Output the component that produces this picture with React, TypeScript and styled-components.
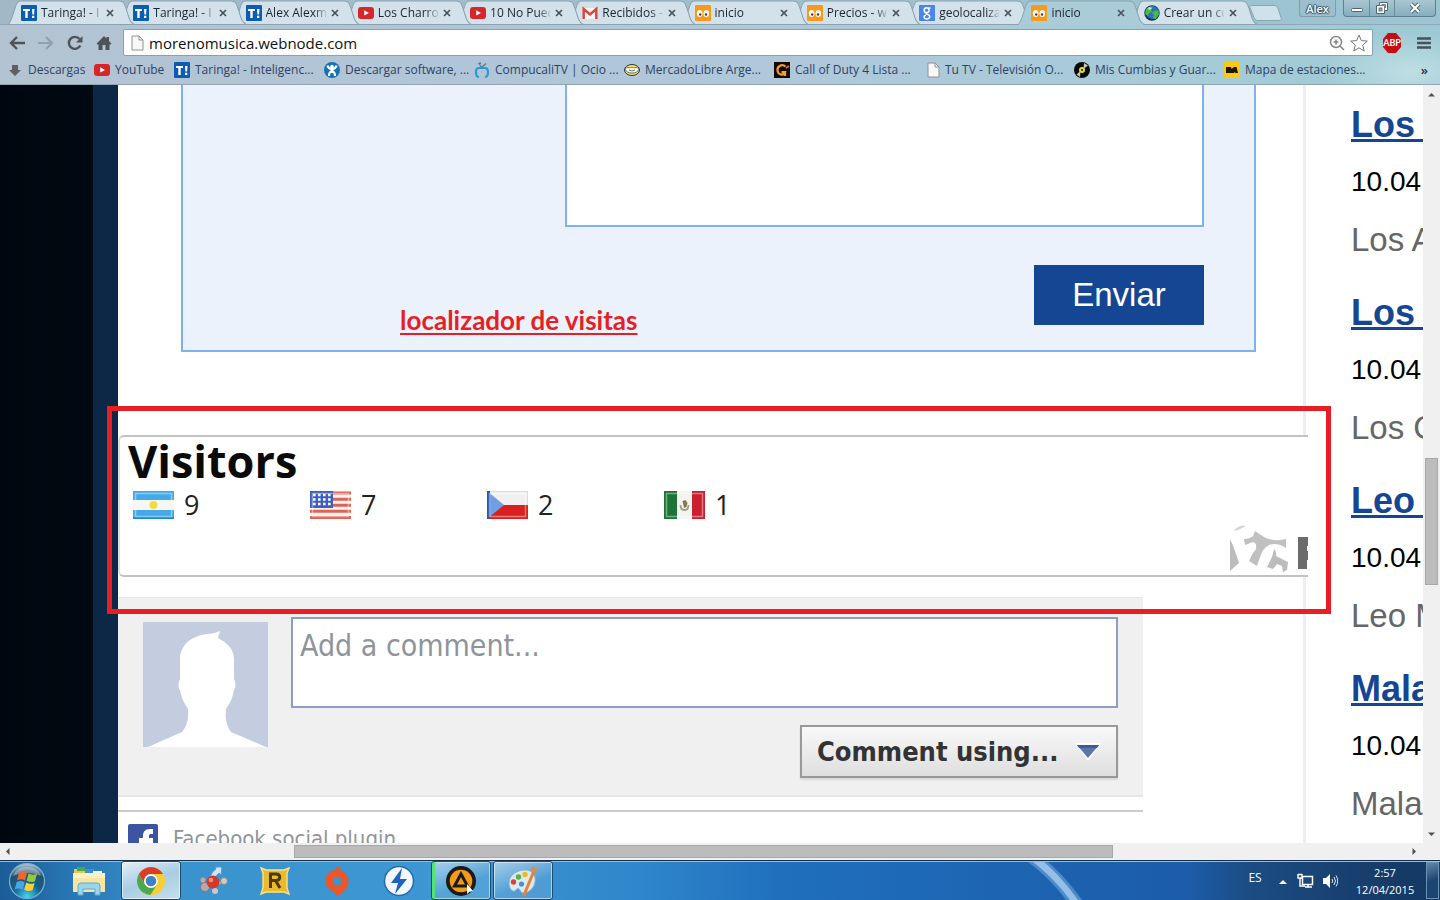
import React from 'react';
import styled, { createGlobalStyle, css } from 'styled-components';

const GlobalStyle = createGlobalStyle`
  * { box-sizing: border-box; }
  body { margin: 0; overflow: hidden; }
  button, textarea, input { font: inherit; margin: 0; border-radius: 0; }
  button { cursor: pointer; padding: 0; border: 0; background: none; }
  svg { display: block; flex: none; }
`;

const ui = `'Open Sans', 'Noto Sans', sans-serif`;
const arial = `'Liberation Sans', Arial, sans-serif`;
const tahoma = `'DejaVu Sans Condensed', 'DejaVu Sans', sans-serif`;

const Desktop = styled.div`
  display: flex;
  flex-direction: column;
  height: 100vh;
  background: #fff;
  font-family: ${ui};
`;

/* ---------- Browser chrome ---------- */

const Chrome = styled.header`
  flex: none;
  color: #222;
  background:
    radial-gradient(ellipse 90px 40px at 98% 85%, rgba(214, 236, 238, 0.6), transparent),
    linear-gradient(90deg, #b3c3d2 0, #b0c6d8 35%, #aec9da 60%, #a4ccd7 85%, #9cc9d3 100%);
  border-bottom: 1px solid #8fa5b1;
`;

const TabStrip = styled.div`
  display: flex;
  align-items: stretch;
  justify-content: space-between;
  height: 25px;
  padding-left: 8px;
  background: linear-gradient(90deg, #a3b8c6, #9fbfcd 50%, #9cc5d1);
  border-bottom: 1px solid #8fa8b6;
`;

const Tabs = styled.nav`
  display: flex;
  flex: 0 1 1235px;
  min-width: 0;
`;

const Tab = styled.div<{ $order: number }>`
  position: relative;
  display: flex;
  align-items: center;
  flex: 1 1 0;
  min-width: 0;
  height: 25px;
  padding: 1px 5px 0 13px;
  z-index: ${(p) => p.$order};
`;

const TabShape = styled.svg`
  position: absolute;
  left: 0;
  top: 0;
  width: calc(100% + 14px);
  height: 25px;
`;

const TabLink = styled.a`
  position: relative;
  display: flex;
  align-items: center;
  gap: 4px;
  flex: 1;
  min-width: 0;
  color: #1c2430;
  text-decoration: none;
  font-size: 12px;
  line-height: 16px;
`;

const TabTitle = styled.span`
  flex: 1;
  overflow: hidden;
  white-space: nowrap;
  margin-right: 4px;
  mask-image: linear-gradient(90deg, #000 80%, rgba(0, 0, 0, 0.15) 100%);
`;

const TabClose = styled.button`
  position: relative;
  width: 10px;
  height: 16px;
  display: grid;
  place-items: center;
`;

const NewTab = styled.button`
  width: 34px;
  height: 16px;
  margin: 5px auto 0 6px;
`;

const WindowControls = styled.div`
  display: flex;
  align-items: flex-start;
  height: 17px;
  padding-right: 4px;
`;

const UserButton = styled.button`
  width: 37px;
  height: 17px;
  margin-right: 7px;
  border: 1px solid #7f9dab;
  border-top: 0;
  border-radius: 0 0 3px 3px;
  background: #9dbfcd;
  color: #fff;
  font-size: 11px;
  line-height: 17px;
  font-weight: 600;
  text-shadow: 1px 0 1px #35505e, -1px 0 1px #35505e, 0 1px 1px #35505e, 0 -1px 1px #35505e;
`;

const WindowGroup = styled.div`
  display: flex;
  height: 17px;
  border: 1px solid #5f7f90;
  border-top: 0;
  border-radius: 0 0 4px 4px;
  background: linear-gradient(180deg, #a9c6d2, #86aebe);
`;

const WindowButton = styled.button<{ $w: number }>`
  display: grid;
  place-items: center;
  width: ${(p) => p.$w}px;
  height: 16px;
  & + & { border-left: 1px solid #6c8b9b; }
`;

const Toolbar = styled.div`
  display: flex;
  align-items: center;
  height: 32px;
  padding: 3px 9px 0 9px;
`;

const NavButtons = styled.div`
  display: flex;
  gap: 13px;
  width: 114px;
`;

const IconButton = styled.button`
  display: grid;
  place-items: center;
  width: 16px;
  height: 20px;
`;

const AddressBar = styled.form`
  display: flex;
  align-items: center;
  flex: 1;
  gap: 5px;
  height: 27px;
  padding: 0 4px 0 7px;
  border: 1px solid #8b9fae;
  border-radius: 2px;
  background: #fff;
`;

const AddressInput = styled.input`
  flex: 1;
  min-width: 0;
  border: 0;
  outline: 0;
  padding: 0;
  color: #111;
  background: none;
  font-size: 15px;
  line-height: 20px;
`;

const ToolbarEnd = styled.div`
  display: flex;
  align-items: center;
  gap: 14px;
  padding-left: 8px;
`;

const Bookmarks = styled.nav`
  display: flex;
  align-items: center;
  height: 27px;
  padding: 0 12px 2px 7px;
`;

const Bookmark = styled.a<{ $w: number }>`
  display: flex;
  align-items: center;
  gap: 5px;
  width: ${(p) => p.$w}px;
  white-space: nowrap;
  color: #2f4264;
  text-decoration: none;
  font-size: 12px;
  line-height: 16px;
`;

const More = styled.button`
  margin-left: auto;
  color: #26333f;
  font-size: 13px;
  line-height: 16px;
  font-weight: 600;
`;

/* ---------- Page ---------- */

const Viewport = styled.div`
  display: flex;
  flex: 1;
  min-height: 0;
`;

const Page = styled.div`
  display: flex;
  flex: 1;
  min-width: 0;
  overflow: hidden;
  background: linear-gradient(90deg, #00060f 0, #000a12 93px, #0d2746 93px, #0d2746 118px, #fff 118px);
  padding-left: 118px;
`;

const Article = styled.main`
  flex: 1;
  min-width: 0;
  border-right: 3px solid #ebeefa;
`;

const ContactForm = styled.form`
  position: relative;
  display: flex;
  flex-direction: column;
  align-items: flex-end;
  gap: 38px;
  margin: 0 47px 0 63px;
  padding: 0 50px 25px 382px;
  border: 2px solid #7fb1ee;
  border-top: 0;
  background: #ebf2fc;
`;

const MessageBox = styled.textarea`
  display: block;
  width: 100%;
  height: 142px;
  resize: none;
  outline: 0;
  border: 2px solid #7fb1ee;
  border-top: 0;
  background: #fff;
`;

const SendButton = styled.button`
  width: 170px;
  height: 60px;
  background: #144693;
  color: #fff;
  font-family: ${arial};
  font-size: 33px;
  line-height: 60px;
`;

const Note = styled.span`
  position: absolute;
  left: 217px;
  bottom: 14px;
  color: #e81e25;
  font-family: Lato, sans-serif;
  font-weight: 700;
  font-size: 26px;
  line-height: 32px;
  text-decoration: underline;
  text-decoration-thickness: 2px;
  text-underline-offset: 3px;
`;

const VisitorsArea = styled.section`
  position: relative;
  margin: 83px -5px 0 0;
`;

const VisitorsCard = styled.div`
  height: 142px;
  padding: 0 0 0 8px;
  border: 2px solid #c2c2c2;
  border-left-color: #dedede;
  border-right: 0;
  border-radius: 6px 0 0 6px;
  background: #fff;
`;

const VisitorsTitle = styled.h2`
  margin: 0;
  color: #0a0a0a;
  font-size: 45px;
  line-height: 48px;
  font-weight: 700;
`;

const FlagList = styled.ul`
  display: flex;
  margin: 4px 0 0;
  padding: 0 0 0 5px;
  list-style: none;
`;

const FlagItem = styled.li`
  display: flex;
  align-items: center;
  gap: 10px;
  width: 177px;
  color: #222;
  font-size: 27px;
  line-height: 32px;
`;

const CounterLogo = styled.svg`
  position: absolute;
  right: 0;
  bottom: 4px;
`;

const Highlight = styled.div`
  position: absolute;
  inset: -29px -23px -37px -11px;
  border: 5px solid #e81e25;
  pointer-events: none;
`;

const Comments = styled.section`
  width: calc(100% - 160px);
  margin-top: 20px;
  font-family: ${tahoma};
`;

const CommentBox = styled.form`
  display: flex;
  align-items: flex-start;
  gap: 23px;
  height: 200px;
  padding: 19px 25px 0 25px;
  border: solid #e7e7e7;
  border-width: 1px 0 2px;
  background: #f0f0f0;
`;

const Avatar = styled.svg`
  margin-top: 5px;
`;

const CommentFields = styled.div`
  display: flex;
  flex-direction: column;
  align-items: flex-end;
  flex: 1;
  gap: 17px;
`;

const CommentInput = styled.textarea`
  display: block;
  width: 100%;
  height: 91px;
  padding: 9px 7px 7px;
  resize: none;
  outline: 0;
  border: 2px solid #8c9fc3;
  background: #fff;
  font-size: 30px;
  line-height: 36px;
  &::placeholder { color: #8f949c; opacity: 1; }
`;

const CommentUsing = styled.button`
  display: flex;
  align-items: center;
  justify-content: space-between;
  width: 318px;
  height: 53px;
  padding: 0 15px;
  border: 2px solid #999;
  background: linear-gradient(180deg, #f8f8f8, #dfdfdf);
  box-shadow: 0 2px 2px rgba(0, 0, 0, 0.1);
  color: #333;
  font-size: 27px;
  line-height: 36px;
  font-weight: 700;
`;

const PluginFooter = styled.a`
  display: flex;
  align-items: flex-start;
  gap: 15px;
  margin-top: 13px;
  padding: 12px 10px;
  border-top: 2px solid #ccc;
  color: #8f949c;
  font-size: 22px;
  line-height: 30px;
  text-decoration: none;
`;

const Sidebar = styled.aside`
  flex: none;
  width: 117px;
  padding: 18px 0 0 45px;
  overflow: hidden;
  white-space: nowrap;
  font-family: ${arial};
`;

const News = styled.article`
  height: 188px;
`;

const NewsLink = styled.a`
  display: block;
  color: #144693;
  font-size: 36px;
  line-height: 44px;
  font-weight: 700;
  text-decoration: underline;
  text-decoration-thickness: 3px;
  text-underline-offset: 2px;
`;

const NewsDate = styled.time`
  display: block;
  margin-top: 17px;
  color: #000;
  font-size: 28px;
  line-height: 36px;
`;

const NewsText = styled.p`
  margin: 18px 0 0;
  color: #666;
  font-size: 33px;
  line-height: 44px;
`;

/* ---------- Scroll bars ---------- */

const VScroll = styled.div`
  display: flex;
  flex-direction: column;
  align-items: center;
  flex: none;
  width: 17px;
  padding: 7px 0 6px;
  background: #f0f0f0;
`;

const HScroll = styled.div`
  display: flex;
  align-items: center;
  flex: none;
  height: 17px;
  padding: 0 23px 0 5px;
  background: #f0f0f0;
`;

const Track = styled.div<{ $before: number; $after: number; $vertical?: boolean }>`
  display: grid;
  flex: 1;
  ${(p) => p.$vertical
    ? css`grid-template-rows: ${p.$before}fr 127px ${p.$after}fr; justify-items: center;`
    : css`grid-template-columns: ${p.$before}fr 819px ${p.$after}fr; align-items: center;`}
`;

const Thumb = styled.div<{ $vertical?: boolean }>`
  border: 1px solid #a8a8a8;
  background: #bcbcbc;
  ${(p) => p.$vertical ? css`grid-row: 2; width: 13px;` : css`grid-column: 2; height: 13px;`}
`;

/* ---------- Taskbar ---------- */

const Taskbar = styled.footer`
  position: relative;
  display: flex;
  align-items: stretch;
  flex: none;
  height: 40px;
  border-top: 1px solid #12304e;
  box-shadow: inset 0 1px 0 #8fc0e2;
  background: linear-gradient(90deg, #1a5c96 0, #2a7ab8 80px, #3a93cc 180px, #3d97d3 450px, #2f86ca 640px, #1f6fbd 780px, #1d65b3 1000px, #1c5ca8 1190px, #1b4c82 1250px, #163a66 1400px);
  color: #fff;
`;

const Streak = styled.svg`
  position: absolute;
  left: 71%;
  top: 1px;
`;

const StartButton = styled.button`
  display: flex;
  align-items: center;
  width: 59px;
  padding-left: 8px;
`;

const TaskList = styled.div`
  display: flex;
  gap: 2px;
`;

const Task = styled.button<{ $state?: 'active' | 'open' | 'busy' }>`
  display: grid;
  place-items: center;
  width: 60px;
  height: 39px;
  border-radius: 3px;
  ${(p) => p.$state && css`
    border: 1px solid #1d4a70;
    box-shadow: inset 0 0 0 1px rgba(255, 255, 255, 0.55);
    background: linear-gradient(160deg, rgba(255, 255, 255, 0.55), rgba(255, 255, 255, 0.12) 60%);
  `}
  ${(p) => p.$state === 'active' && css`
    background: linear-gradient(160deg, #e4eff7, #a8cde4 50%, #c4dfee);
  `}
  ${(p) => p.$state === 'busy' && css`
    box-shadow: inset 3px 0 1px #4ee86c, inset 0 0 0 1px rgba(255, 255, 255, 0.55);
  `}
`;

const Tray = styled.div`
  display: flex;
  align-items: center;
  margin-left: auto;
  font-size: 11px;
  line-height: 17px;
`;

const Language = styled.button`
  width: 30px;
  height: 24px;
  margin-bottom: 6px;
  color: #fff;
  font-size: 12px;
`;

const TrayIcons = styled.div`
  display: flex;
  align-items: center;
  gap: 7px;
  margin-left: 6px;
`;

const Clock = styled.button`
  width: 76px;
  margin-left: 9px;
  color: #fff;
  font-size: 11px;
  line-height: 17px;
  text-align: center;
`;

const ShowDesktop = styled.button`
  align-self: stretch;
  width: 13px;
  margin: 1px 1px 1px 3px;
  border: 1px solid #6d92b5;
  background: linear-gradient(160deg, #6488ab, #1d4574 50%);
`;

/* ---------- Icons ---------- */

const Taringa = () => (
  <svg width="16" height="16" viewBox="0 0 16 16">
    <rect width="16" height="16" rx="1" fill="#0b5cb5" />
    <path d="M2 4h7v2H6.700v7H4.300V6H2zM11 4h2.500l-.4 5.500h-1.700zM11 10.700h2.300V13H11z" fill="#fff" />
  </svg>
);

const YouTube = () => (
  <svg width="16" height="16" viewBox="0 0 16 16">
    <rect y="2" width="16" height="12" rx="3" fill="#d8252a" />
    <path d="M6.200 5.200v5.400L11 8z" fill="#fff" />
  </svg>
);

const Gmail = () => (
  <svg width="16" height="16" viewBox="0 0 16 16">
    <path d="M1 3h14v11H1z" fill="#f4f4f4" />
    <path d="M1.700 14V4L8 9.500 14.300 4v10" fill="none" stroke="#d9453d" strokeWidth="2.400" />
  </svg>
);

const Webnode = () => (
  <svg width="16" height="16" viewBox="0 0 16 16">
    <rect width="16" height="16" rx="1" fill="#f79a1c" />
    <ellipse cx="4.700" cy="8.500" rx="2.800" ry="3.500" fill="#fff" />
    <ellipse cx="11.300" cy="8.500" rx="2.800" ry="3.500" fill="#fff" />
    <circle cx="5.200" cy="9.500" r="1.200" fill="#5d3a10" />
    <circle cx="11" cy="9.500" r="1.200" fill="#5d3a10" />
  </svg>
);

const Google = () => (
  <svg width="16" height="16" viewBox="0 0 16 16">
    <rect width="16" height="16" rx="1" fill="#4a85ee" />
    <circle cx="7.600" cy="5.200" r="2.400" fill="none" stroke="#fff" strokeWidth="1.600" />
    <path d="M9.500 3h2M8 7.600c-2 1 0 1.600 1.500 2.200 2.500 1.200 1 4.200-1.900 4.200s-3.800-2.900-.6-3.700" fill="none" stroke="#fff" strokeWidth="1.400" />
  </svg>
);

const Globe = () => (
  <svg width="16" height="16" viewBox="0 0 16 16">
    <circle cx="8" cy="8" r="7.700" fill="#14344f" />
    <circle cx="8.500" cy="7.500" r="6.500" fill="#2b73b8" />
    <path d="M2 4c2-2 5-3 7-2L7 5l1 2-3 1-1 3-3-2zM10 6l4-1 1 4-3 5-3-1 1-3-2-2z" fill="#4db848" />
    <path d="M5 2l3 1-2 2-2-1z" fill="#c8e9c0" />
  </svg>
);

const Doc = () => (
  <svg width="13" height="16" viewBox="0 0 13 16">
    <path d="M1 1h7l4 4v10H1z" fill="#f8f8f8" stroke="#909090" />
    <path d="M8 1v4h4" fill="none" stroke="#909090" />
  </svg>
);

const DownArrow = () => (
  <svg width="16" height="16" viewBox="0 0 16 16">
    <path d="M5 3h6v5h3l-6 6-6-6h3z" fill="#5d5f64" />
  </svg>
);

const Softonic = () => (
  <svg width="16" height="16" viewBox="0 0 16 16">
    <circle cx="8" cy="8" r="8" fill="#1573b5" />
    <path d="M3.500 3.500c1 4.500 8 4.500 9 0M5 14c0-6 6-6 6 0" fill="none" stroke="#fff" strokeWidth="2.200" />
    <circle cx="8" cy="4.500" r="1.800" fill="#fff" />
    <path d="M6.500 7h3v4h-3z" fill="#fff" />
  </svg>
);

const TvIcon = () => (
  <svg width="16" height="16" viewBox="0 0 16 16">
    <path d="M5 6c-3 0-3 2-3 4s0 5 3 5M8 6h3c3 0 3 2 3 4s0 5-3 5" fill="none" stroke="#2a9ad0" strokeWidth="2.200" />
    <path d="M8 6L5 1.500 7 1M8 5l4-3.500" fill="none" stroke="#4b7f9c" strokeWidth="1.300" />
    <path d="M4 6h7" stroke="#2a9ad0" strokeWidth="2" />
  </svg>
);

const Mercado = () => (
  <svg width="16" height="16" viewBox="0 0 16 16">
    <ellipse cx="8" cy="8" rx="7.500" ry="5.500" fill="#f5e53d" stroke="#2b3457" />
    <path d="M1 7c3-3 5 0 7-2 2 2 4-1 7 2-1 3-4 4-7 4S2 10 1 7z" fill="#fff" stroke="#444c66" strokeWidth=".8" />
    <path d="M5 8l3 1 3-1" fill="none" stroke="#444c66" strokeWidth=".8" />
  </svg>
);

const GIcon = () => (
  <svg width="16" height="16" viewBox="0 0 16 16">
    <rect width="16" height="16" fill="#140904" />
    <path d="M11.500 4.500C8 1.500 3 4 3.500 8.500c.5 4.500 6 5.500 7.500 1.500H7.500M11 9v5" fill="none" stroke="#f1a22c" strokeWidth="2.200" />
    <path d="M12 6l3-2" stroke="#d97316" strokeWidth="2" />
  </svg>
);

const Vinyl = () => (
  <svg width="16" height="16" viewBox="0 0 16 16">
    <circle cx="8" cy="8" r="8" fill="#0a0a0a" />
    <path d="M10 1l4 2.500L9.500 7zM2.500 12.500L6.500 9 6 15z" fill="#c5c5c5" />
    <circle cx="8" cy="8" r="3" fill="#e8df28" />
    <circle cx="8" cy="8" r="1" fill="#111" />
  </svg>
);

const MapIcon = () => (
  <svg width="16" height="16" viewBox="0 0 16 16">
    <rect width="16" height="16" rx="1" fill="#fcc911" />
    <path d="M2 5h5l.5 2L10 5h2.500L14 11h-2.500L11 10l-1 1H2z" fill="#1b1608" />
  </svg>
);

const Flag = ({ children }: { children: React.ReactNode }) => (
  <svg width="41" height="28" viewBox="0 0 41 28">
    {children}
    <rect x="2.500" y="2.500" width="36" height="23" fill="none" stroke="#fff" strokeOpacity=".4" strokeWidth="1.500" />
  </svg>
);

const Argentina = () => (
  <Flag>
    <rect width="41" height="28" fill="#44a9e6" />
    <rect y="9" width="41" height="10" fill="#f6f6f3" />
    <path d="M0 27h41" stroke="#1c8bd3" strokeWidth="2" />
    <circle cx="20.500" cy="14" r="4" fill="#f4da3d" />
  </Flag>
);

const Usa = () => (
  <Flag>
    <rect width="41" height="28" fill="#fbf3f2" />
    <path d="M0 2h41M0 8.200h41M0 14.200h41M0 20.200h41M0 26.400h41" stroke="#dd6455" strokeWidth="3" />
    <rect width="23" height="17" fill="#3d5fc0" />
    <path d="M3 4h18M3 8.500h18M3 13h18" stroke="#fff" strokeWidth="2.400" strokeDasharray="2.600 2.400" />
  </Flag>
);

const Czech = () => (
  <Flag>
    <rect width="41" height="14" fill="#f0f0f0" />
    <path d="M0 .5h41M40.500 0v14" stroke="#dadada" />
    <rect y="14" width="41" height="14" fill="#d9201f" />
    <path d="M0 0l17 14L0 28z" fill="#6f9fe0" />
    <path d="M1.500 0v28" stroke="#2258b8" strokeWidth="3" />
  </Flag>
);

const Mexico = () => (
  <Flag>
    <rect width="41" height="28" fill="#f3f3f0" />
    <rect width="13" height="28" fill="#1c7537" />
    <rect x="28" width="13" height="28" fill="#cb2030" />
    <path d="M16.500 14q0 5 4 5t4-5" fill="none" stroke="#9aa287" strokeWidth="1.800" />
    <path d="M18.500 10l3-1 2 3-1 4-2.500 1z" fill="#8a7650" />
  </Flag>
);

const Orb = () => (
  <svg width="38" height="38" viewBox="0 0 38 38">
    <defs>
      <radialGradient id="orb" cx=".5" cy=".95" r=".9">
        <stop offset="0" stopColor="#3fd6f5" />
        <stop offset=".45" stopColor="#14608f" />
        <stop offset=".8" stopColor="#24506f" />
        <stop offset="1" stopColor="#9db9c9" />
      </radialGradient>
    </defs>
    <circle cx="19" cy="19" r="17.500" fill="url(#orb)" stroke="#7fb0cf" strokeWidth="1.200" />
    <path d="M5 14c4-12 24-12 28 0-9-4-19-4-28 0z" fill="#fff" fillOpacity=".35" />
    <path d="M11 11c3-2 5-1.500 8 0l-2 7.500c-3-1.700-5-1.700-8-.2z" fill="#f0652a" />
    <path d="M20.500 11.500c3 1.500 5.500 1.500 8.500.2l-2 7.500c-3 1.300-5.500 1-8.400-.4z" fill="#93c83e" />
    <path d="M8.700 20c3-1.500 5-1.300 7.900.2l-2 7.500c-3-1.600-5.200-1.500-8-.1z" fill="#48a6e6" />
    <path d="M18.200 20.500c3 1.500 5.500 1.700 8.400.4l-2 7.400c-3 1.200-5.600 1-8.400-.5z" fill="#fdce3a" />
  </svg>
);

const Explorer = () => (
  <svg width="34" height="32" viewBox="0 0 34 32">
    <path d="M2 4h10l2 3h16v20H2z" fill="#e6c75e" />
    <path d="M5 2h8v4H5z" fill="#45a94c" />
    <path d="M13 4h9v4h-9z" fill="#3a8fd0" />
    <path d="M21 6h9v4h-9z" fill="#f6f3e4" />
    <path d="M1 8h32v19H1z" fill="#f7e6a0" />
    <path d="M1 8h32v5H1z" fill="#fbf1c4" />
    <path d="M6 30v-9q0-3 3-3h16q3 0 3 3v9h-5v-6H11v6z" fill="#9bd4ef" stroke="#5fa9cf" />
  </svg>
);

const ChromeLogo = () => (
  <svg width="30" height="30" viewBox="0 0 30 30">
    <circle cx="15" cy="15" r="14" fill="#f7cf35" />
    <path d="M2.880 8A14 14 0 0 1 27.100 8H15a7 7 0 0 0-6.100 10.500z" fill="#da3a2f" />
    <path d="M2.880 8a14 14 0 0 0 11.400 21l6.800-10.500a7 7 0 0 1-12.200 0z" fill="#4aa84e" />
    <circle cx="15" cy="15" r="6.800" fill="#fff" />
    <circle cx="15" cy="15" r="5.300" fill="#3f80cf" />
  </svg>
);

const Molecule = () => (
  <svg width="32" height="30" viewBox="0 0 32 30">
    <path d="M8 20L26 16M16 16l2 10" stroke="#aab4be" strokeWidth="3" />
    <path d="M13 11q2-6 6-8l-1-2 7 0-1 8-2-2q-3 2-4 6z" fill="#cfe4f4" stroke="#5e94c0" />
    <circle cx="8" cy="21" r="4.500" fill="#b9a7aa" stroke="#7d7c85" />
    <circle cx="27" cy="15" r="3.500" fill="#ccc9cd" stroke="#85868f" />
    <circle cx="18" cy="25" r="3" fill="#d0c5c8" />
    <circle cx="6" cy="14" r="2.500" fill="#d8a295" />
    <circle cx="16" cy="16" r="6.500" fill="#cf3a2b" />
    <circle cx="14" cy="14" r="2.300" fill="#f08f7c" />
  </svg>
);

const Rockstar = () => (
  <svg width="32" height="30" viewBox="0 0 32 30">
    <path d="M2 2l5 2h18l5-2-2 5v15l2 6-5-2H7l-5 2 2-6V7z" fill="#ebb92a" stroke="#f8e38b" strokeWidth="1.400" />
    <path d="M11.500 22V8h5.500c5 0 5 6.500 0 6.500h-5M16.500 14.500l4.500 7.500" fill="none" stroke="#4a3a16" strokeWidth="3" />
  </svg>
);

const Origin = () => (
  <svg width="26" height="32" viewBox="0 0 26 32">
    <path d="M15 1c-2 1-3 2.500-2.800 4C6 5 1.500 9.500 1.500 15.500S5 25 11 27.500c1 1 1.300 2 0 4 7-2 13.500-8 13.500-15.500 0-5-2.500-8-6.500-10-2.500-1.200-3.500-2.500-3-5z" fill="#e9572b" />
    <circle cx="13" cy="16" r="4.300" fill="#3f94cb" />
  </svg>
);

const Daemon = () => (
  <svg width="32" height="32" viewBox="0 0 32 32">
    <circle cx="16" cy="16" r="14.500" fill="#f2f7fc" stroke="#2768b5" strokeWidth="1.500" />
    <path d="M19 3L8 18h7l-3 11 12-15h-7z" fill="#1e63c0" />
  </svg>
);

const Aimp = () => (
  <svg width="32" height="32" viewBox="0 0 32 32">
    <circle cx="16" cy="16" r="15" fill="#1c1a17" />
    <circle cx="16" cy="16" r="11.300" fill="#f49c1a" />
    <path d="M16 9l6.500 12h-13z" fill="none" stroke="#1c1a17" strokeWidth="3" />
    <path d="M22 19v10l2.500-2.300L28 26z" fill="#fff" />
  </svg>
);

const Paint = () => (
  <svg width="32" height="32" viewBox="0 0 32 32">
    <path d="M2 18C2 10 10 5 18 5s11 6 10 12-6 11-12 11c-3 0-2-4-5-4.500-2-.3-2 3.500-5 2.500S2 21 2 18z" fill="#dbe9f2" stroke="#8fb1c6" />
    <circle cx="6.500" cy="17" r="2.700" fill="#d8423c" />
    <circle cx="11.500" cy="12" r="2.700" fill="#58b14c" />
    <circle cx="18" cy="9.500" r="2.700" fill="#f0b92d" />
    <circle cx="14.500" cy="19" r="2.600" fill="#4c8fc8" />
    <path d="M27 6L17 30" stroke="#e68433" strokeWidth="3" strokeLinecap="round" />
    <path d="M25 1l7 3-4 4-4-2z" fill="#c59261" />
  </svg>
);

/* ---------- Data ---------- */

const tabs = [
  { title: 'Taringa! - I', icon: <Taringa /> },
  { title: 'Taringa! - I', icon: <Taringa /> },
  { title: 'Alex Alexm', icon: <Taringa /> },
  { title: 'Los Charro', icon: <YouTube /> },
  { title: '10 No Pued', icon: <YouTube /> },
  { title: 'Recibidos -', icon: <Gmail /> },
  { title: 'inicio', icon: <Webnode /> },
  { title: 'Precios - w', icon: <Webnode /> },
  { title: 'geolocaliza', icon: <Google /> },
  { title: 'inicio', icon: <Webnode />, active: true },
  { title: 'Crear un co', icon: <Globe /> },
];

const bookmarks = [
  { label: 'Descargas', icon: <DownArrow />, w: 87 },
  { label: 'YouTube', icon: <YouTube />, w: 80 },
  { label: 'Taringa! - Inteligenc...', icon: <Taringa />, w: 150 },
  { label: 'Descargar software, ...', icon: <Softonic />, w: 150 },
  { label: 'CompucaliTV | Ocio ...', icon: <TvIcon />, w: 150 },
  { label: 'MercadoLibre Arge...', icon: <Mercado />, w: 150 },
  { label: 'Call of Duty 4 Lista ...', icon: <GIcon />, w: 153 },
  { label: 'Tu TV - Televisión O...', icon: <Doc />, w: 147 },
  { label: 'Mis Cumbias y Guar...', icon: <Vinyl />, w: 150 },
  { label: 'Mapa de estaciones...', icon: <MapIcon />, w: 150 },
];

const visitors = [
  { country: 'Argentina', flag: <Argentina />, count: 9 },
  { country: 'USA', flag: <Usa />, count: 7 },
  { country: 'Czech Republic', flag: <Czech />, count: 2 },
  { country: 'Mexico', flag: <Mexico />, count: 1 },
];

const news = [
  { title: 'Los A', date: '10.04', text: 'Los A' },
  { title: 'Los C', date: '10.04', text: 'Los C' },
  { title: 'Leo M', date: '10.04', text: 'Leo M' },
  { title: 'Mala', date: '10.04', text: 'Mala' },
];

const tasks: { name: string; icon: React.ReactNode; state?: 'active' | 'open' | 'busy' }[] = [
  { name: 'Explorador', icon: <Explorer /> },
  { name: 'Chrome', icon: <ChromeLogo />, state: 'active' },
  { name: 'Ares', icon: <Molecule /> },
  { name: 'Rockstar', icon: <Rockstar /> },
  { name: 'Origin', icon: <Origin /> },
  { name: 'Daemon', icon: <Daemon /> },
  { name: 'AIMP', icon: <Aimp />, state: 'busy' },
  { name: 'Paint', icon: <Paint />, state: 'open' },
];

/* ---------- Sections ---------- */

const BrowserChrome = () => (
  <Chrome>
    <TabStrip>
      <Tabs aria-label="Pestañas">
        {tabs.map((t, i) => (
          <Tab key={i} $order={t.active ? 20 : 12 - i}>
            <TabShape viewBox="0 0 126 25" preserveAspectRatio="none">
              <path
                d="M0 24.500C3 23 4 18 7 8c2-6 3-7 6-7h98c4 0 5 2 7 8 3 10 4 14 8 15.500z"
                fill={t.active ? '#a9ccd8' : '#d3e2ea'}
                stroke="#8ba3b0"
              />
              {t.active && <path d="M1 24.500h124" stroke="#a9ccd8" strokeWidth="2" />}
            </TabShape>
            <TabLink href="#">
              {t.icon}
              <TabTitle>{t.title}</TabTitle>
            </TabLink>
            <TabClose aria-label="Cerrar">
              <svg width="8" height="8" viewBox="0 0 8 8">
                <path d="M1 1l6 6M7 1L1 7" stroke="#47525b" strokeWidth="1.700" />
              </svg>
            </TabClose>
          </Tab>
        ))}
      </Tabs>
      <NewTab aria-label="Nueva pestaña">
        <svg width="34" height="16" viewBox="0 0 34 16">
          <path d="M2 .5h23c2 0 3 1 4 3l3 9c1 2 0 3-2 3H9c-2 0-3-1-4-3l-4-10C.5 1.500 1 .5 2 .5z" fill="#cfe2e9" stroke="#8aa3b0" />
        </svg>
      </NewTab>
      <WindowControls>
        <UserButton>Alex</UserButton>
        <WindowGroup>
          <WindowButton $w={25} aria-label="Minimizar">
            <svg width="14" height="12" viewBox="0 0 14 12">
              <rect x="1.500" y="6.500" width="11" height="3" rx="1" fill="#fff" stroke="#4e6471" />
            </svg>
          </WindowButton>
          <WindowButton $w={25} aria-label="Restaurar">
            <svg width="14" height="13" viewBox="0 0 14 13">
              <path d="M4.500 .5h8v8h-3v3h-8v-8h3z" fill="#fff" stroke="#4e6471" />
              <path d="M4.500 3.500h5v5M7 3v-.5h3.500V6" fill="none" stroke="#4e6471" strokeWidth=".8" />
              <rect x="4" y="6" width="3" height="3" fill="#8cb0be" stroke="#4e6471" strokeWidth=".8" />
            </svg>
          </WindowButton>
          <WindowButton $w={41} aria-label="Cerrar ventana">
            <svg width="14" height="12" viewBox="0 0 14 12">
              <path d="M3 2l8 8M11 2l-8 8" stroke="#4e6471" strokeWidth="4" />
              <path d="M3 2l8 8M11 2l-8 8" stroke="#fff" strokeWidth="2.200" />
            </svg>
          </WindowButton>
        </WindowGroup>
      </WindowControls>
    </TabStrip>
    <Toolbar>
      <NavButtons>
        <IconButton aria-label="Atrás">
          <svg width="16" height="14" viewBox="0 0 16 14">
            <path d="M8 1L2 7l6 6M2 7h14" fill="none" stroke="#4d5358" strokeWidth="2.400" />
          </svg>
        </IconButton>
        <IconButton aria-label="Adelante">
          <svg width="16" height="14" viewBox="0 0 16 14">
            <path d="M8 1l6 6-6 6M14 7H0" fill="none" stroke="#93a0ab" strokeWidth="2.200" />
          </svg>
        </IconButton>
        <IconButton aria-label="Recargar">
          <svg width="16" height="16" viewBox="0 0 16 16">
            <path d="M13.300 10.500A6 6 0 1 1 12.500 4" fill="none" stroke="#4d5358" strokeWidth="2.400" />
            <path d="M15.500 1v6.500H9z" fill="#4d5358" />
          </svg>
        </IconButton>
        <IconButton aria-label="Inicio">
          <svg width="16" height="16" viewBox="0 0 16 16">
            <path d="M8 1l2.500 2.600V2H13v4l2.500 2.700-1 .8H13.500V15H9.500v-5h-3v5h-4V9.500H1.500l-1-.8z" fill="#4d5358" />
          </svg>
        </IconButton>
      </NavButtons>
      <AddressBar>
        <Doc />
        <AddressInput aria-label="Dirección" defaultValue="morenomusica.webnode.com" />
        <svg width="16" height="16" viewBox="0 0 16 16">
          <circle cx="7" cy="7" r="5.500" fill="none" stroke="#888" strokeWidth="1.500" />
          <path d="M7 4.500v5M4.500 7h5M11 11l4 4" stroke="#888" strokeWidth="1.700" />
        </svg>
        <svg width="18" height="18" viewBox="0 0 18 18">
          <path d="M9 1l2.300 5.600 6 .5-4.600 4 1.500 6L9 13.800 3.800 17l1.500-6L.7 7.100l6-.5z" fill="#fff" stroke="#777" />
        </svg>
      </AddressBar>
      <ToolbarEnd>
        <button aria-label="AdBlock Plus">
          <svg width="22" height="20" viewBox="0 0 22 20">
            <path d="M7 0h8l5 6v8l-5 6H7l-5-6V6z" fill="#c70d12" />
            <text x="11" y="13" fill="#fff" fontSize="9" fontWeight="700" textAnchor="middle" fontFamily="Lato">ABP</text>
          </svg>
        </button>
        <button aria-label="Menú">
          <svg width="14" height="14" viewBox="0 0 14 14">
            <path d="M0 2.500h14M0 7h14M0 11.500h14" stroke="#43525b" strokeWidth="2.600" />
          </svg>
        </button>
      </ToolbarEnd>
    </Toolbar>
    <Bookmarks aria-label="Marcadores">
      {bookmarks.map((b) => (
        <Bookmark key={b.label} href="#" $w={b.w}>
          {b.icon}
          <span>{b.label}</span>
        </Bookmark>
      ))}
      <More>»</More>
    </Bookmarks>
  </Chrome>
);

const Visitors = () => (
  <VisitorsArea>
    <VisitorsCard>
      <VisitorsTitle>Visitors</VisitorsTitle>
      <FlagList>
        {visitors.map((v) => (
          <FlagItem key={v.country}>
            {v.flag}
            <span>{v.count}</span>
          </FlagItem>
        ))}
      </FlagList>
      <CounterLogo width="78" height="48" viewBox="0 0 78 48">
        <path d="M0 14q4 8 9 24l-9 8z" fill="#bdbdbd" />
        <path d="M4 6c3-5 8-6 12-5l-8 4z" fill="#d2d2d2" />
        <path d="M14 14q6 0 9-3l2-5 9 6q10 5 22 2v9q-9-6-17-3-7 4-9 12l-3 9-8-5q2-6 7-12 1-6-3-7l-8 3z" fill="#c0c0c0" />
        <path d="M44 24q3 2 2 7l12 6-1 8-4 2-1-6-5-2-4 5-6-2q6-10 7-18z" fill="#bcbcbc" />
        <path d="M68 12h10v9h-1v5h1v9h-1v9h-9z" fill="#6b6b6b" />
      </CounterLogo>
    </VisitorsCard>
    <Highlight />
  </VisitorsArea>
);

const FacebookComments = () => (
  <Comments>
    <CommentBox>
      <Avatar width="125" height="125" viewBox="0 0 125 125">
        <rect width="125" height="125" fill="#c4cde0" />
        <path d="M5 125l34-15c5-6 7-14 6-23-4-6-7-12-8-19-2-3-2-7 0-11V36c1-14 12-22 27-24 5 0 8-1 13-3l-2 7c9 5 15 10 16 20v21c2 4 2 8 0 11-1 7-4 13-8 19-1 9 0 16 5 23l35 15z" fill="#fff" />
      </Avatar>
      <CommentFields>
        <CommentInput aria-label="Comentario" placeholder="Add a comment..." />
        <CommentUsing type="button">
          Comment using...
          <svg width="26" height="20" viewBox="0 0 26 20">
            <path d="M0 1h26L13 19z" fill="#fff" />
            <path d="M2 3h22l-11 13z" fill="#5c76b0" />
            <path d="M2 3h22l-2 3H4z" fill="#3f5a98" />
          </svg>
        </CommentUsing>
      </CommentFields>
    </CommentBox>
    <PluginFooter href="#">
      <svg width="30" height="30" viewBox="0 0 30 30">
        <rect width="30" height="30" rx="2" fill="#3b55a0" />
        <path d="M25 5h-3c-5 0-7 3-7 7v2h-4v5h4v11h6V19h4v-5h-4v-2c0-1.500.8-2 2-2h2z" fill="#fff" />
      </svg>
      <span>Facebook social plugin</span>
    </PluginFooter>
  </Comments>
);

export default function App() {
  return (
    <Desktop>
      <GlobalStyle />
      <BrowserChrome />
      <Viewport>
        <Page>
          <Article>
            <ContactForm>
              <MessageBox aria-label="Mensaje" />
              <SendButton type="button">Enviar</SendButton>
              <Note>localizador de visitas</Note>
            </ContactForm>
            <Visitors />
            <FacebookComments />
          </Article>
          <Sidebar>
            {news.map((n) => (
              <News key={n.title}>
                <NewsLink href="#">{n.title}</NewsLink>
                <NewsDate>{n.date}</NewsDate>
                <NewsText>{n.text}</NewsText>
              </News>
            ))}
          </Sidebar>
        </Page>
        <VScroll>
          <svg width="7" height="5" viewBox="0 0 7 5"><path d="M0 4.500L3.500 1 7 4.500z" fill="#505050" /></svg>
          <Track $vertical $before={360} $after={247}><Thumb $vertical /></Track>
          <svg width="7" height="5" viewBox="0 0 7 5"><path d="M0 .5L3.500 4 7 .5z" fill="#505050" /></svg>
        </VScroll>
      </Viewport>
      <HScroll>
        <svg width="5" height="7" viewBox="0 0 5 7"><path d="M4.500 0L1 3.500 4.500 7z" fill="#505050" /></svg>
        <Track $before={284} $after={299}><Thumb /></Track>
        <svg width="5" height="7" viewBox="0 0 5 7"><path d="M.5 0L4 3.500 .5 7z" fill="#505050" /></svg>
      </HScroll>
      <Taskbar>
        <Streak width="70" height="38" viewBox="0 0 70 38">
          <path d="M6 0h20c12 10 24 24 34 38H44C34 24 20 10 6 0z" fill="#7db4e6" fillOpacity=".5" />
          <path d="M11 0h11c12 10 24 24 34 38h-8C38 24 24 10 11 0z" fill="#b5d5f2" fillOpacity=".7" />
        </Streak>
        <StartButton aria-label="Inicio"><Orb /></StartButton>
        <TaskList>
          {tasks.map((t) => (
            <Task key={t.name} aria-label={t.name} $state={t.state}>{t.icon}</Task>
          ))}
        </TaskList>
        <Tray>
          <Language>ES</Language>
          <TrayIcons>
            <svg width="14" height="10" viewBox="0 0 14 10"><path d="M3 8l4-4 4 4z" fill="#fff" /></svg>
            <svg width="18" height="16" viewBox="0 0 18 16">
              <path d="M5.500 3.500h10v8h-10zM8 14h7M11 12v2" fill="none" stroke="#fff" strokeWidth="1.500" />
              <path d="M1 1.500h4M1 1v4h4V1M3 5v8h5" fill="none" stroke="#fff" strokeWidth="1.400" />
            </svg>
            <svg width="16" height="16" viewBox="0 0 16 16">
              <path d="M1 5h3l4-4v14l-4-4H1z" fill="#fff" />
              <path d="M10 6q1.500 2 0 4M12 4q3 4 0 8M14 2.500q3.500 5.500 0 11" fill="none" stroke="#dbe7f2" />
            </svg>
          </TrayIcons>
          <Clock>2:57<br />12/04/2015</Clock>
          <ShowDesktop aria-label="Mostrar escritorio" />
        </Tray>
      </Taskbar>
    </Desktop>
  );
}
